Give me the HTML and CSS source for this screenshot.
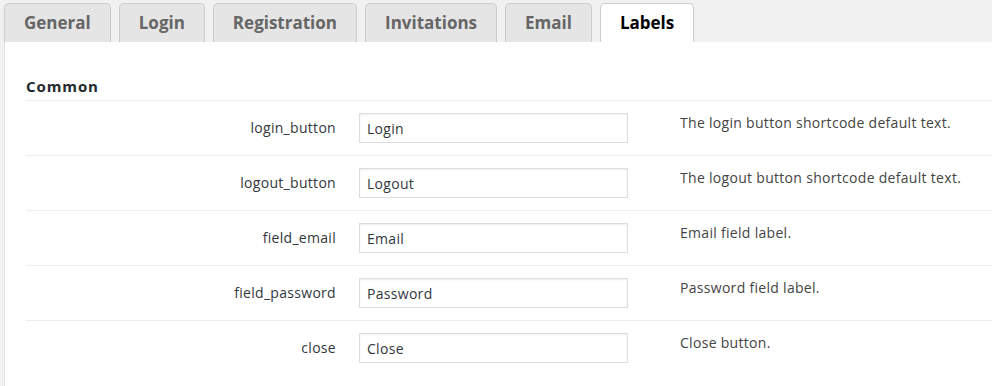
FILE: index.html
```html
<!DOCTYPE html>
<html lang="en">
<head>
  <meta charset="UTF-8">
  <title>Settings - Labels</title>
  <link rel="stylesheet" href="styles.css">
</head>
<body>
  <div class="nav-tabs">
    <a class="nav-tab" href="#">General</a>
    <a class="nav-tab" href="#">Login</a>
    <a class="nav-tab" href="#">Registration</a>
    <a class="nav-tab" href="#">Invitations</a>
    <a class="nav-tab" href="#">Email</a>
    <a class="nav-tab active" href="#">Labels</a>
  </div>

  <div class="panel">
    <h3 class="section-title">Common</h3>
    <div class="form-table">
      <div class="row">
        <label class="row-label" for="login_button">login_button</label>
        <div class="row-field"><input type="text" id="login_button" value="Login"></div>
        <div class="row-desc">The login button shortcode default text.</div>
      </div>
      <div class="row">
        <label class="row-label" for="logout_button">logout_button</label>
        <div class="row-field"><input type="text" id="logout_button" value="Logout"></div>
        <div class="row-desc">The logout button shortcode default text.</div>
      </div>
      <div class="row">
        <label class="row-label" for="field_email">field_email</label>
        <div class="row-field"><input type="text" id="field_email" value="Email"></div>
        <div class="row-desc">Email field label.</div>
      </div>
      <div class="row">
        <label class="row-label" for="field_password">field_password</label>
        <div class="row-field"><input type="text" id="field_password" value="Password"></div>
        <div class="row-desc">Password field label.</div>
      </div>
      <div class="row">
        <label class="row-label" for="close">close</label>
        <div class="row-field"><input type="text" id="close" value="Close"></div>
        <div class="row-desc">Close button.</div>
      </div>
    </div>
  </div>
</body>
</html>
```

FILE: styles.css
```css
body { margin: 0; background-color: #f1f1f1; font-family: "Open Sans", "Noto Sans", sans-serif; font-size: 14px; letter-spacing: 0.3px; color: #23282d; overflow: hidden; }

.nav-tabs { display: flex; gap: 8px; padding: 3px 0 0 4px; height: 39px; }
.nav-tab {
  display: block;
  box-sizing: border-box;
  height: 39px;
  padding: 0 19px;
  line-height: 37px;
  font-size: 17px;
  font-weight: bold;
  letter-spacing: 0;
  color: #666;
  text-decoration: none;
  background-color: #e5e5e5;
  border: 1px solid #ccc;
  border-bottom: none;
  border-radius: 5px 5px 0 0;
}
.nav-tab.active { background-color: #fff; color: #000; }

.panel { background: #fff; margin-left: 4px; border-left: 1px solid #e2e2e2; padding: 33px 0 0 21px; height: 344px; box-sizing: border-box; }
.section-title { margin: 0 0 3px; font-size: 15px; font-weight: bold; letter-spacing: 0.9px; line-height: 22px; color: #23282d; }

.row { display: grid; grid-template-columns: 333px 321px 1fr; height: 54px; border-top: 1px solid #eee; }
.row-label { text-align: right; padding: 16px 23px 0 0; line-height: 22px; color: #32373c; }
.row-field { padding-top: 12px; }
.row-field input {
  box-sizing: border-box;
  width: 269px;
  height: 30px;
  padding: 0 7px;
  font: inherit;
  letter-spacing: inherit;
  color: #32373c;
  border: 1px solid #ddd;
  box-shadow: inset 0 1px 2px rgba(0, 0, 0, 0.07);
  outline: none;
}
.row-desc { padding-top: 11px; line-height: 22px; color: #444; }
```
